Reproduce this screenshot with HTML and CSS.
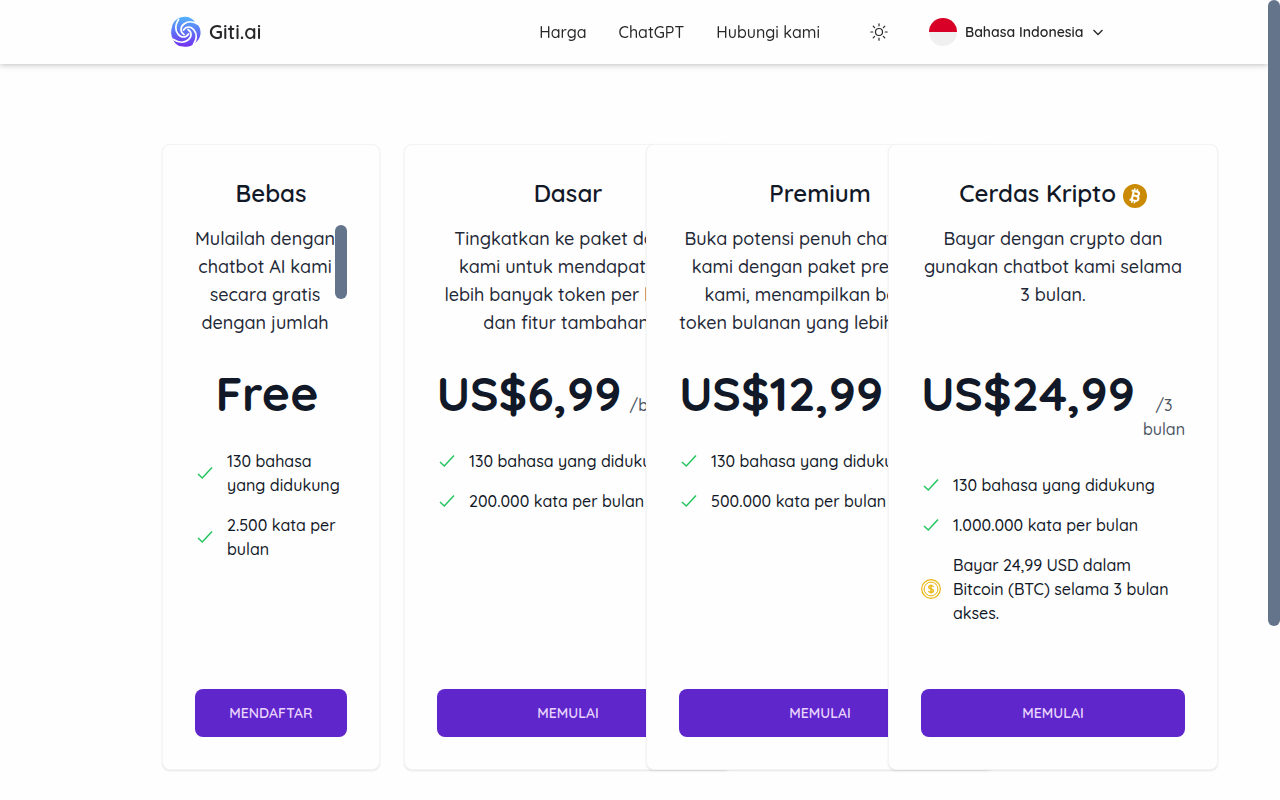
FILE: index.html
```html
<!DOCTYPE html>
<html lang="id">
<head>
  <meta charset="UTF-8">
  <meta name="viewport" content="width=device-width, initial-scale=1">
  <title>Giti.ai - Harga</title>
  <link rel="stylesheet" href="styles.css">
</head>
<body>

<svg class="sprite" aria-hidden="true">
  <symbol id="check" viewBox="0 0 20 20">
    <path d="M3 11 L7.3 15 L17 4.5" fill="none" stroke="currentColor" stroke-width="1.5"/>
  </symbol>
  <symbol id="coin" viewBox="0 0 20 20">
    <g fill="none" stroke="currentColor">
      <circle cx="10" cy="10" r="9.3" stroke-width="1.2"/>
      <circle cx="10" cy="10" r="6.9" stroke-width="1"/>
      <path d="M12.4 8 C12.2 6.9 11.2 6.6 10 6.6 C8.6 6.6 7.7 7.3 7.7 8.3 C7.7 10.6 12.4 9.4 12.4 11.7 C12.4 12.8 11.4 13.4 10 13.4 C8.6 13.4 7.7 12.8 7.6 11.8 M10 5.4 V14.6" stroke-width="1.3"/>
    </g>
  </symbol>
</svg>

<div class="page">
  <header class="header">
    <div class="container header-inner">
      <a class="brand" href="#">
        <svg class="logo" viewBox="0 0 32 32" aria-hidden="true">
          <defs>
            <linearGradient id="swirl" x1="0" y1="0" x2="0" y2="1">
              <stop offset="0" stop-color="#54b4fb"/>
              <stop offset="0.5" stop-color="#5f72f6"/>
              <stop offset="1" stop-color="#7430f0"/>
            </linearGradient>
          </defs>
          <path d="M13 1 C18 0 22 2 25 6 C29 9 31 13 30.500 18 C30 22 28 25 25 27 C22 30 18 31.500 13 30.500 C8 30.500 4 27 3 23 C1 20 .5 15 2 11 C3 5 8 1.500 13 1 Z" fill="url(#swirl)"/>
          <g fill="none" stroke="#fff" stroke-width="1.700" stroke-linecap="round">
            <path id="arm" d="M13.500 14 C16 10 21 10 24 14 C27 18 27 23 23.500 28.500"/>
            <use href="#arm" transform="rotate(90 16 16)"/>
            <use href="#arm" transform="rotate(180 16 16)"/>
            <use href="#arm" transform="rotate(270 16 16)"/>
          </g>
        </svg>
        <span>Giti.ai</span>
      </a>

      <nav class="nav">
        <a href="#">Harga</a>
        <a href="#">ChatGPT</a>
        <a href="#">Hubungi kami</a>
      </nav>

      <button class="theme" type="button" aria-label="Tema">
        <svg viewBox="0 0 18 18" fill="none" stroke="currentColor" stroke-width="1.200" stroke-linecap="round">
          <circle cx="9" cy="9" r="3.500"/>
          <path d="M9 .8 V2.800 M9 15.200 V17.200 M.8 9 H2.800 M15.200 9 H17.200 M3.200 3.200 L4.600 4.600 M13.400 13.400 L14.800 14.800 M3.200 14.800 L4.600 13.400 M13.400 4.600 L14.800 3.200"/>
        </svg>
      </button>

      <div class="language">
        <svg class="flag" viewBox="0 0 28 28" aria-hidden="true">
          <circle cx="14" cy="14" r="14" fill="#f0f0f0"/>
          <path d="M0 14 A14 14 0 0 1 28 14 Z" fill="#d80027"/>
        </svg>
        <select aria-label="Bahasa">
          <option>Bahasa Indonesia</option>
        </select>
        <svg class="chevron" viewBox="0 0 12 12" aria-hidden="true">
          <path d="M1.500 4 L6 8.500 L10.500 4" fill="none" stroke="currentColor" stroke-width="1.300"/>
        </svg>
      </div>
    </div>
  </header>

  <main class="container pricing">
    <section class="card">
      <h3>Bebas</h3>
      <div class="scroll-area">
        <p class="description">Mulailah dengan chatbot AI kami secara gratis dengan jumlah</p>
        <div class="thumb"></div>
      </div>
      <div class="price">
        <span class="amount">Free</span>
        <span class="period"></span>
      </div>
      <ul class="features">
        <li><svg class="check"><use href="#check"/></svg><span>130 bahasa yang didukung</span></li>
        <li><svg class="check"><use href="#check"/></svg><span>2.500 kata per bulan</span></li>
      </ul>
      <button class="btn" type="button">Mendaftar</button>
    </section>

    <section class="card card-basic">
      <h3>Dasar</h3>
      <p class="description">Tingkatkan ke paket dasar kami untuk mendapatkan lebih banyak token per bulan dan fitur tambahan.</p>
      <div class="price">
        <span class="amount">US$6,99</span>
        <span class="period">/bulanan</span>
      </div>
      <ul class="features">
        <li><svg class="check"><use href="#check"/></svg><span>130 bahasa yang didukung</span></li>
        <li><svg class="check"><use href="#check"/></svg><span>200.000 kata per bulan</span></li>
      </ul>
      <button class="btn" type="button">Memulai</button>
    </section>

    <section class="card card-premium">
      <h3>Premium</h3>
      <div class="scroll-area">
        <p class="description">Buka potensi penuh chatbot AI kami dengan paket premium kami, menampilkan batas token bulanan yang lebih besar.</p>
        <div class="thumb"></div>
      </div>
      <div class="price">
        <span class="amount">US$12,99</span>
        <span class="period">/bulanan</span>
      </div>
      <ul class="features">
        <li><svg class="check"><use href="#check"/></svg><span>130 bahasa yang didukung</span></li>
        <li><svg class="check"><use href="#check"/></svg><span>500.000 kata per bulan</span></li>
      </ul>
      <button class="btn" type="button">Memulai</button>
    </section>

    <section class="card card-crypto">
      <h3>Cerdas Kripto
        <svg class="bitcoin" viewBox="0 0 24 24" aria-hidden="true">
          <circle cx="12" cy="12" r="12" fill="#ca8a04"/>
          <g fill="none" stroke="#fff" transform="rotate(13 12 12)">
            <path d="M9.700 7.300 V16.700 M7.500 7.300 H13 C16.300 7.300 16.300 11.700 13 11.700 H9.700 M13 11.700 C17 11.700 17 16.700 13 16.700 H7.500" stroke-width="2.100"/>
            <path d="M10.300 4.600 V7 M13 4.600 V7 M10.300 17 V19.400 M13 17 V19.400" stroke-width="1.500"/>
          </g>
        </svg>
      </h3>
      <p class="description">Bayar dengan crypto dan gunakan chatbot kami selama 3 bulan.</p>
      <div class="price">
        <span class="amount">US$24,99</span>
        <span class="period">/3 bulan</span>
      </div>
      <ul class="features">
        <li><svg class="check"><use href="#check"/></svg><span>130 bahasa yang didukung</span></li>
        <li><svg class="check"><use href="#check"/></svg><span>1.000.000 kata per bulan</span></li>
        <li><svg class="coin"><use href="#coin"/></svg><span>Bayar 24,99 USD dalam Bitcoin (BTC) selama 3 bulan akses.</span></li>
      </ul>
      <button class="btn" type="button">Memulai</button>
    </section>
  </main>
</div>

<div class="thumb page-thumb"></div>

</body>
</html>
```

FILE: styles.css
```css
* {
  box-sizing: border-box;
}

body {
  margin: 0;
  font-family: Quicksand, Inter, sans-serif;
  font-size: 16px;
  line-height: 24px;
  font-weight: 500;
  color: #111827;
  background: #fefefe;
}

a {
  color: inherit;
  text-decoration: none;
}

button, select {
  font-family: inherit;
  color: inherit;
  background: none;
  border: none;
  padding: 0;
  cursor: pointer;
}

svg {
  flex-shrink: 0;
}

.sprite {
  display: none;
}

.page {
  height: 100vh;
  margin-right: 12px;
  overflow-y: auto;
  scrollbar-width: none;
}

/* scrollbars */
.thumb {
  position: absolute;
  top: 0;
  right: 0;
  width: 12px;
  height: 66%;
  background: #64748b;
  border-radius: 6px;
}

.page-thumb {
  position: fixed;
  height: 78.25%;
}

.scroll-area {
  position: relative;
  padding-right: 12px;
}

.container {
  max-width: 944px;
  margin: 0 auto;
}

/* header */
.header {
  position: sticky;
  top: 0;
  z-index: 10;
  background: #fefefe;
  color: #27272a;
  box-shadow: 0 1px 6px rgba(0, 0, 0, 0.25);
}

.header-inner {
  display: flex;
  align-items: center;
  height: 64px;
  padding: 0 2px 0 8px;
}

.brand {
  display: flex;
  align-items: center;
  gap: 7px;
  margin-right: auto;
  font-size: 20px;
  font-weight: 600;
}

.logo {
  width: 32px;
  height: 32px;
}

.nav {
  display: flex;
  gap: 32px;
}

.theme {
  display: flex;
  margin: 0 41px 0 50px;
}

.theme svg {
  width: 18px;
  height: 18px;
}

.language {
  display: flex;
  align-items: center;
  gap: 8px;
}

.flag {
  width: 28px;
  height: 28px;
}

.language select {
  appearance: none;
  font-size: 14px;
  font-weight: 600;
}

.chevron {
  width: 12px;
  height: 12px;
}

/* pricing cards */
.pricing {
  display: grid;
  grid-template-columns: repeat(4, minmax(0, 1fr));
  gap: 24px;
  padding: 80px 0 252px;
}

/* each card stacks over the one before it */
.card {
  position: relative;
  display: flex;
  flex-direction: column;
  padding: 32px;
  text-align: center;
  background: #fefefe;
  border: 1px solid #f3f4f6;
  border-radius: 8px;
  box-shadow: 0 1px 2px rgba(0, 0, 0, 0.1);
}

.card-basic {
  min-width: 328px;
}

.card-premium {
  min-width: 348px;
}

.card-crypto {
  min-width: 330px;
}

.card h3 {
  margin: 0 0 16px;
  font-size: 24px;
  line-height: 32px;
  font-weight: 600;
}

.bitcoin {
  width: 24px;
  height: 24px;
  vertical-align: -6px;
}

.description {
  height: 112px;
  margin: 0;
  font-size: 18px;
  line-height: 28px;
  color: #1f2937;
}

.price {
  display: flex;
  align-items: baseline;
  justify-content: center;
  gap: 8px;
  margin: 32px 0;
}

.amount {
  font-size: 48px;
  line-height: 48px;
  font-weight: 700;
}

.period {
  color: #4b5563;
}

.features {
  display: flex;
  flex: 1;
  flex-direction: column;
  gap: 16px;
  margin: 0 0 64px;
  padding: 0;
  list-style: none;
  text-align: left;
}

.features li {
  display: flex;
  align-items: center;
  gap: 12px;
}

.features svg {
  width: 20px;
  height: 20px;
}

.check {
  color: #22c55e;
}

.coin {
  color: #eab308;
}

.btn {
  height: 48px;
  font-size: 14px;
  font-weight: 600;
  text-transform: uppercase;
  color: #e9d5ff;
  background: #5f26cb;
  border-radius: 8px;
}
```
